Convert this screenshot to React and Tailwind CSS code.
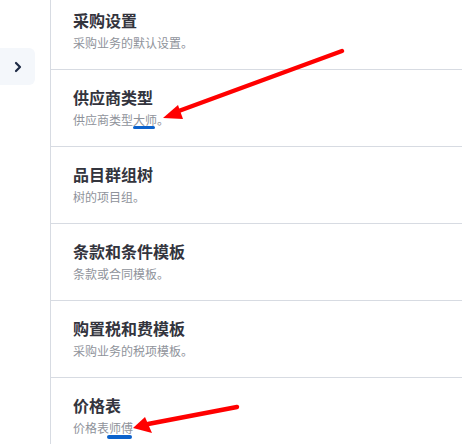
// 采购设置列表 + 标注箭头
const rows = [
  { title: '采购设置', desc: [{ t: '采购业务的默认设置。' }] },
  { title: '供应商类型', desc: [{ t: '供应商类型' }, { t: '大师', mark: 'a' }, { t: '。' }] },
  { title: '品目群组树', desc: [{ t: '树的项目组。' }] },
  { title: '条款和条件模板', desc: [{ t: '条款或合同模板。' }] },
  { title: '购置税和费模板', desc: [{ t: '采购业务的税项模板。' }] },
  { title: '价格表', desc: [{ t: '价格表' }, { t: '师傅', mark: 'b' }] },
];

function Desc({ parts }) {
  return (
    <p className="mt-[2px] text-[12px] leading-[18px] text-[#8f939b]">
      {parts.map((p, i) =>
        p.mark ? (
          <span key={i} className="relative">
            {p.t}
            {p.mark === 'a' ? (
              <span className="absolute left-0 bottom-[-1px] h-[3px] w-[22px] rounded-full bg-[#0b62cc]" />
            ) : (
              <span className="absolute left-[-2px] bottom-[-3px] h-[4px] w-[25px] rounded-full bg-[#0b62cc]" />
            )}
          </span>
        ) : (
          <span key={i}>{p.t}</span>
        )
      )}
    </p>
  );
}

export default function App() {
  return (
    <div
      className="relative flex h-[444px] w-[462px] overflow-hidden bg-white"
      style={{ fontFamily: '"Noto Sans CJK SC", "Noto Sans", sans-serif' }}
    >
      <aside className="w-[51px] shrink-0 border-r border-[#d7dbe2] pt-[48px]">
        <button className="flex h-[37px] w-[35px] items-center justify-center rounded-r-md bg-[#f4f7fb] text-[#1e2a44]">
          <svg width="8" height="12" viewBox="0 0 8 12" fill="none">
            <path d="M2 2l4 4-4 4" stroke="currentColor" strokeWidth="2.2" strokeLinecap="round" strokeLinejoin="round" />
          </svg>
        </button>
      </aside>

      <div className="-mt-[7px] flex-1">
        {rows.map(r => (
          <div key={r.title} className="border-b border-[#d7dbe2] pl-[22px] pt-[15px] pb-[17px]">
            <h3 className="text-[16px] font-bold leading-[24px] text-[#33343d]">{r.title}</h3>
            <Desc parts={r.desc} />
          </div>
        ))}
      </div>

      <svg className="pointer-events-none absolute left-0 top-0" width="462" height="444">
        <line x1="342" y1="51" x2="176" y2="112" stroke="#ff0000" strokeWidth="4.5" strokeLinecap="round" />
        <polygon points="163,118 178,105 183,119" fill="#ff0000" />
        <line x1="237" y1="407" x2="148" y2="424" stroke="#ff0000" strokeWidth="4.5" strokeLinecap="round" />
        <polygon points="133,428 145,417 152,433" fill="#ff0000" />
      </svg>
    </div>
  );
}
